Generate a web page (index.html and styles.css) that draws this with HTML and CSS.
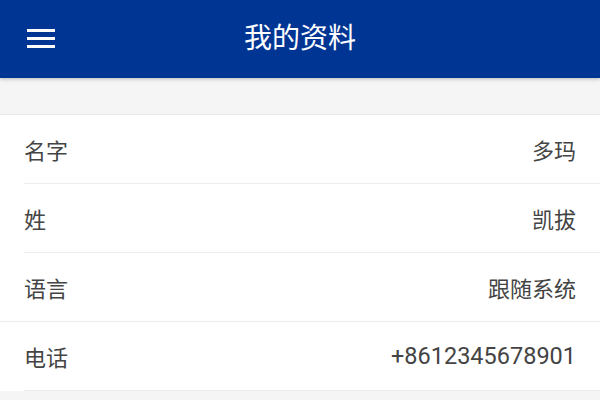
FILE: index.html
```html
<!DOCTYPE html>
<html lang="zh-CN">
<head>
    <meta charset="UTF-8">
    <meta name="viewport" content="width=device-width, initial-scale=1.0">
    <title>我的资料</title>
    <link rel="stylesheet" href="styles.css">
</head>
<body>
    <div class="header">
        <div class="menu-button">
            <svg width="28" height="20" viewBox="0 0 28 20">
                <rect x="0" y="1" width="28" height="3" fill="#fff"/>
                <rect x="0" y="9" width="28" height="3" fill="#fff"/>
                <rect x="0" y="17" width="28" height="3" fill="#fff"/>
            </svg>
        </div>
        <div class="title">我的资料</div>
    </div>

    <div class="spacer"></div>

    <div class="profile-list">
        <div class="row">
            <span class="label">名字</span>
            <span class="value">多玛</span>
        </div>
        <div class="row">
            <span class="label">姓</span>
            <span class="value">凯拔</span>
        </div>
        <div class="row row-full">
            <span class="label">语言</span>
            <span class="value">跟随系统</span>
        </div>
        <div class="row">
            <span class="label">电话</span>
            <span class="value phone">+8612345678901</span>
        </div>
    </div>

    <div class="spacer"></div>
</body>
</html>
```

FILE: styles.css
```css
body {
    font-family: Roboto, "Noto Sans CJK SC", sans-serif;
    margin: 0;
    background-color: #f5f5f5;
}

.header {
    height: 78px;
    background-color: #003594;
    display: flex;
    align-items: center;
    position: relative;
    box-shadow: 0 1px 4px rgba(0, 0, 0, 0.25);
}

.menu-button {
    width: 28px;
    height: 20px;
    margin-left: 27px;
    margin-top: -2px;
}

.menu-button svg {
    display: block;
}

.title {
    position: absolute;
    left: 0;
    right: 0;
    top: 0;
    line-height: 78px;
    text-align: center;
    color: #fff;
    font-size: 28px;
    pointer-events: none;
}

.spacer {
    height: 36px;
}

.profile-list {
    background-color: #fff;
    border-top: 1px solid #eaeaea;
}

.row {
    height: 68px;
    margin-left: 24px;
    padding-right: 24px;
    display: flex;
    align-items: center;
    justify-content: space-between;
    border-bottom: 1px solid #ececec;
    font-size: 22px;
    color: #444;
}

.row-full {
    margin-left: 0;
    padding-left: 24px;
}

.phone {
    font-size: 23.5px;
}
```
